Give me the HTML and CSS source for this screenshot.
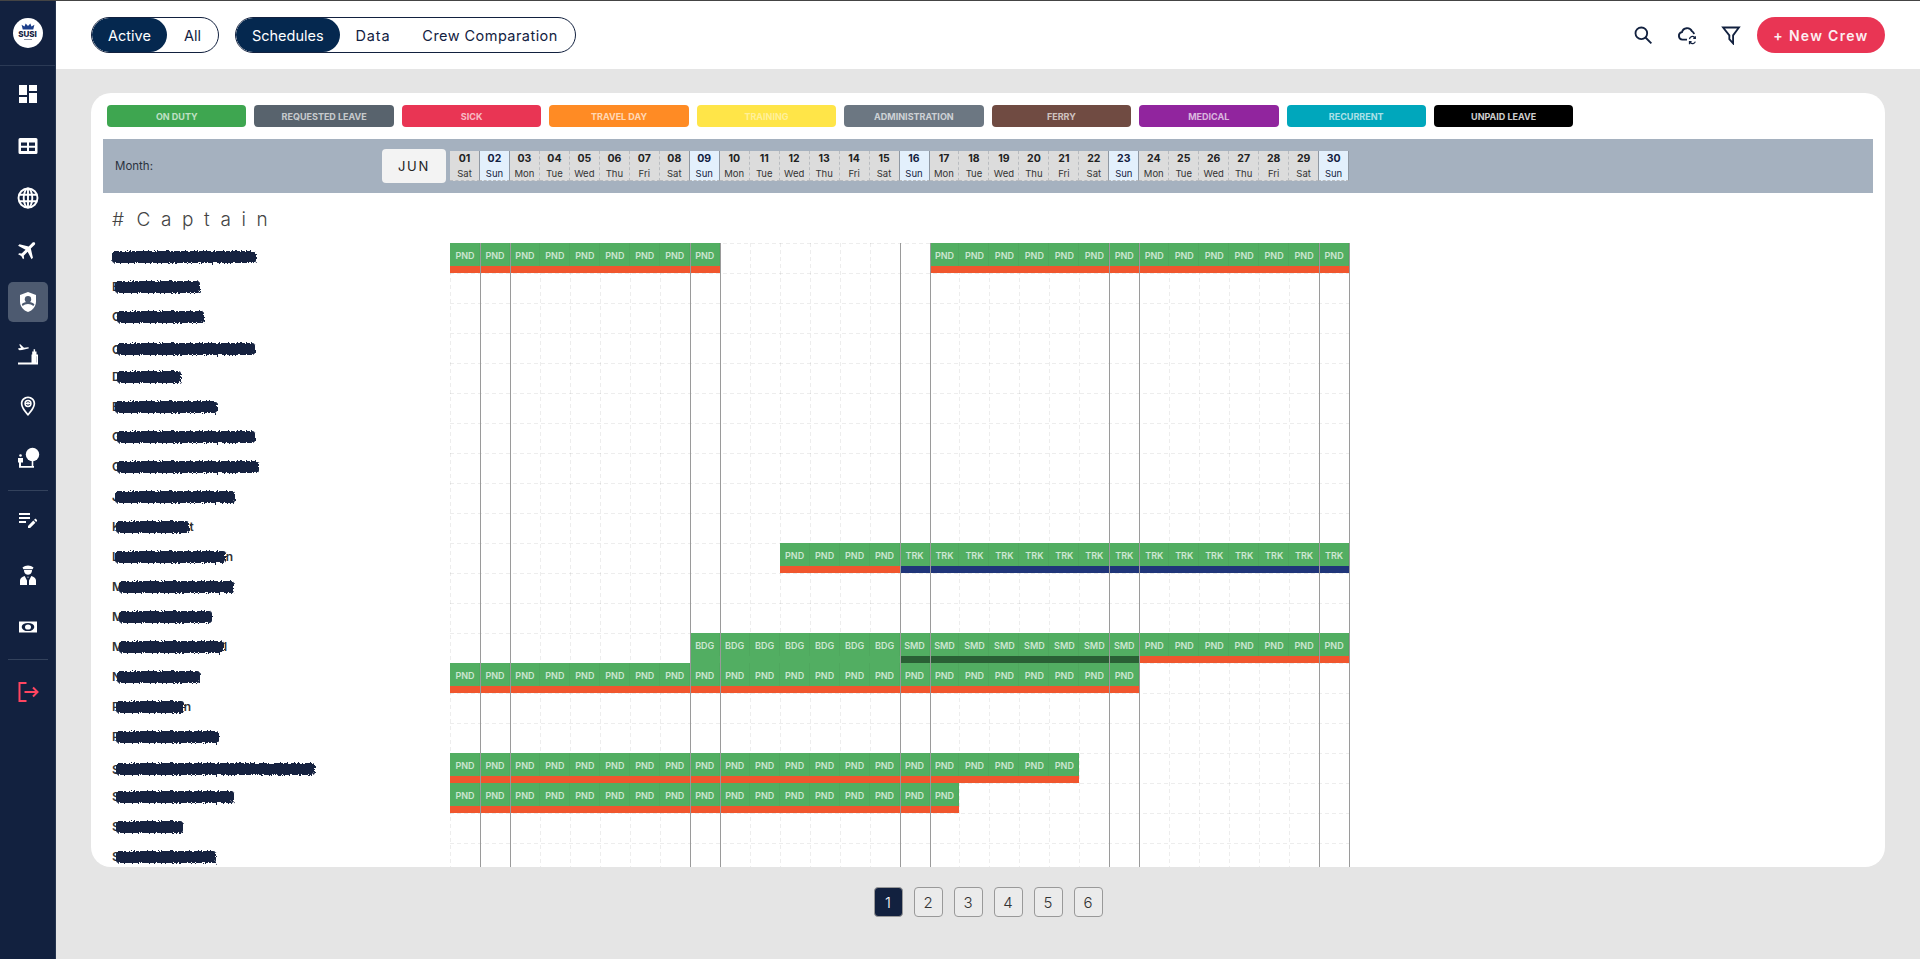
FILE: index.html
```html
<!DOCTYPE html>
<html lang="en">
<head>
<meta charset="utf-8">
<title>Crew Schedules</title>
<link rel="stylesheet" href="styles.css">
</head>
<body>
<svg class="defs" width="0" height="0" aria-hidden="true"><filter id="scribble" x="-5%" y="-60%" width="110%" height="220%"><feTurbulence type="fractalNoise" baseFrequency="0.55" numOctaves="2" seed="4"/><feDisplacementMap in="SourceGraphic" scale="5"/><feGaussianBlur stdDeviation="0.35"/></filter></svg>
<div class="app">
<aside class="sidebar">
  <div class="brand">
    <div class="logo">
      <svg class="crown" viewBox="0 0 24 12"><path d="M3 11 1 3l5 3 2-5 4 4 4-4 2 5 5-3-2 8z"/></svg>
      <span class="logo-text">SUSI</span>
      <span class="logo-line"></span>
    </div>
  </div>
  <nav class="nav">
    <a class="nav-item"><svg viewBox="0 0 24 24"><path d="M3 13h8V3H3v10zm0 8h8v-6H3v6zm10 0h8V11h-8v10zm0-18v6h8V3h-8z"/></svg></a>
    <a class="nav-item"><svg viewBox="0 0 24 24"><path fill-rule="evenodd" d="M4 4h16a1.500 1.500 0 0 1 1.500 1.500v13A1.500 1.500 0 0 1 20 20H4a1.500 1.500 0 0 1-1.500-1.500v-13A1.500 1.500 0 0 1 4 4zm1 4.500v3.200h6V8.500zm8 0v3.200h6V8.500zm-8 5.300v3.200h6v-3.200zm8 0v3.200h6v-3.200z"/></svg></a>
    <a class="nav-item"><svg viewBox="0 0 24 24" class="line"><circle cx="12" cy="12" r="9.500"/><ellipse cx="12" cy="12" rx="4.300" ry="9.500"/><path d="M3 8.700h18M3 15.300h18M12 2.500v19"/></svg></a>
    <a class="nav-item"><svg viewBox="0 0 24 24"><path transform="rotate(45 12 12)" d="M21 16v-2l-8-5V3.500c0-.83-.67-1.500-1.500-1.500S10 2.670 10 3.500V9l-8 5v2l8-2.500V19l-2 1.500V22l3.500-1 3.500 1v-1.500L13 19v-5.500l8 2.500z"/></svg></a>
    <a class="nav-item active"><svg viewBox="0 0 24 24"><path d="M12 2 4 5v6.500c0 4.900 3.400 9.100 8 10.500 4.600-1.400 8-5.600 8-10.500V5z"/><circle class="cut" cx="12" cy="9.300" r="3.200"/><path class="cut" d="M5.600 14.200c1.400-1.500 3.900-2.400 6.400-2.400s5 .9 6.400 2.400c-.3.700-.7 1.300-1.100 1.900-1.200-1.200-3.200-2-5.300-2s-4.100.8-5.300 2c-.4-.6-.7-1.200-.7-1.900z"/></svg></a>
    <a class="nav-item"><svg viewBox="0 0 24 24"><path d="M2.500 6.200 5 6l-1.800-3.400 1.100-.3L8 5.700l4-.4c1 0 1.300 1.100.3 1.300L6 8 3.500 8.300 2 7zM2 20.500h20v2H2zM15.500 12.500h6.500v8h-1.500v-6.300h-3.500v6.300h-1.500zM17.600 7.300h1.500v2.200h1.400v3h-4.300v-3h1.400z"/><path d="M17 14h3.500v7H17z"/></svg></a>
    <a class="nav-item"><svg viewBox="0 0 24 24"><path fill-rule="evenodd" d="M12 2.500c4 0 7.200 3 7.200 6.900 0 4.200-4.300 9.300-7.200 12.600-2.900-3.300-7.200-8.400-7.200-12.600 0-3.900 3.200-6.900 7.200-6.900zm0 1.700c-3 0-5.500 2.300-5.500 5.200 0 3 2.900 6.900 5.500 10 2.600-3.100 5.500-7 5.500-10 0-2.900-2.500-5.200-5.500-5.200z"/><path fill-rule="evenodd" d="M12 5.800a3.700 3.700 0 1 1 0 7.400 3.700 3.700 0 0 1 0-7.400zm0 1.500a2.200 2.200 0 0 0-2.100 1.500h1a1.200 1.200 0 0 1 2.200 0h1A2.200 2.200 0 0 0 12 7.300zm-1.100 2.800h-1a2.200 2.200 0 0 0 4.200 0h-1a1.200 1.200 0 0 1-2.200 0z"/></svg></a>
    <a class="nav-item"><svg viewBox="0 0 24 24"><circle cx="16.500" cy="8.500" r="6.700"/><path d="M15.700 14h1.600v6h-1.600z"/><circle cx="4.500" cy="9.500" r="1.300"/><path d="M2 12h5v4.500H5V20h13v1.800H3V16.500H2z"/></svg></a>
    <hr class="nav-rule">
    <a class="nav-item"><svg viewBox="0 0 24 24" class="up"><path d="M3 10h11v2H3v-2zm0-2h11V6H3v2zm0 8h7v-2H3v2zm15.010-3.130.71-.71c.39-.39 1.020-.39 1.410 0l.71.71c.39.39.39 1.020 0 1.410l-.71.71-2.120-2.120zm-.71.71-5.300 5.300V21h2.120l5.300-5.300-2.120-2.120z"/></svg></a>
    <a class="nav-item"><svg viewBox="0 0 24 24"><path d="M6.500 4.500C8 3.300 10 2.500 12 2.500s4 .8 5.500 2l-.9 1.800H7.400z"/><path d="M8 7h8c0 .6 0 1.100-.2 1.700-.5 1.700-2 3-3.800 3s-3.300-1.300-3.800-3C8 8.100 8 7.600 8 7z"/><path d="M4 22v-4.500c0-2.100 2-3.800 4.700-4.500l2.300 4.500V22zm9 0v-4.500l2.300-4.500c2.700.7 4.700 2.400 4.700 4.500V22zM11.300 13.800h1.400l-.7 1.400z"/></svg></a>
    <a class="nav-item"><svg viewBox="0 0 24 24"><path d="M3 6.500h18v11H3z"/><ellipse class="cut" cx="12" cy="12" rx="6.300" ry="4.100"/><ellipse cx="12" cy="12" rx="3" ry="2.600"/></svg></a>
    <hr class="nav-rule">
    <a class="nav-item logout"><svg viewBox="0 0 24 24"><path d="M10.500 3H3.500v18h7M8.500 12H21.500M17 7.500l4.500 4.500-4.500 4.500"/></svg></a>
  </nav>
</aside>
<div class="main">
  <header class="topbar">
    <div class="pill"><span class="pill-item on">Active</span><span class="pill-item all">All</span></div>
    <div class="pill"><span class="pill-item on">Schedules</span><span class="pill-item data">Data</span><span class="pill-item crew">Crew Comparation</span></div>
    <div class="tools">
      <svg class="tool" viewBox="0 0 24 24"><circle cx="10" cy="10" r="7"/><path d="m15 15 7 7"/></svg>
      <svg class="tool" viewBox="0 0 24 24"><path d="M12 17.500H6.500a4.500 4.500 0 0 1-.6-8.900A6.500 6.500 0 0 1 18 7.500a5 5 0 0 1 2.500 3.500"/><path class="thin" d="M15 17a3.500 3.500 0 0 1 6-2.200l1 1M22 20a3.500 3.500 0 0 1-6 1.200l-1-1M22 13.500v2.500h-2.500M15 23v-3h2.500"/></svg>
      <svg class="tool" viewBox="0 0 24 24"><path d="M2.500 3h19l-7 9.500V22l-4.500-5v-4.500z"/></svg>
      <button class="new-crew">+ New Crew</button>
    </div>
  </header>
  <section class="content">
    <div class="card">
      <div class="legend">
        <span class="tag on-duty">ON DUTY</span>
        <span class="tag requested">REQUESTED LEAVE</span>
        <span class="tag sick">SICK</span>
        <span class="tag travel">TRAVEL DAY</span>
        <span class="tag training">TRAINING</span>
        <span class="tag admin">ADMINISTRATION</span>
        <span class="tag ferry">FERRY</span>
        <span class="tag medical">MEDICAL</span>
        <span class="tag recurrent">RECURRENT</span>
        <span class="tag unpaid">UNPAID LEAVE</span>
      </div>
      <div class="month-bar">
        <span class="month-label">Month:</span>
        <button class="month-btn">JUN</button>
        <div class="days">
          <div class="day"><b>01</b><span>Sat</span></div><div class="day sun"><b>02</b><span>Sun</span></div><div class="day"><b>03</b><span>Mon</span></div><div class="day"><b>04</b><span>Tue</span></div><div class="day"><b>05</b><span>Wed</span></div><div class="day"><b>06</b><span>Thu</span></div><div class="day"><b>07</b><span>Fri</span></div><div class="day"><b>08</b><span>Sat</span></div><div class="day sun"><b>09</b><span>Sun</span></div><div class="day"><b>10</b><span>Mon</span></div><div class="day"><b>11</b><span>Tue</span></div><div class="day"><b>12</b><span>Wed</span></div><div class="day"><b>13</b><span>Thu</span></div><div class="day"><b>14</b><span>Fri</span></div><div class="day"><b>15</b><span>Sat</span></div><div class="day sun"><b>16</b><span>Sun</span></div><div class="day"><b>17</b><span>Mon</span></div><div class="day"><b>18</b><span>Tue</span></div><div class="day"><b>19</b><span>Wed</span></div><div class="day"><b>20</b><span>Thu</span></div><div class="day"><b>21</b><span>Fri</span></div><div class="day"><b>22</b><span>Sat</span></div><div class="day sun"><b>23</b><span>Sun</span></div><div class="day"><b>24</b><span>Mon</span></div><div class="day"><b>25</b><span>Tue</span></div><div class="day"><b>26</b><span>Wed</span></div><div class="day"><b>27</b><span>Thu</span></div><div class="day"><b>28</b><span>Fri</span></div><div class="day"><b>29</b><span>Sat</span></div><div class="day sun"><b>30</b><span>Sun</span></div>
        </div>
      </div>
      <h2 class="rank"># Captain</h2>
      <div class="chart">
        <div class="grid-v"></div><div class="grid-h"></div>
        <div class="row"><div class="name"><i class="redact solo" style="width:144px"></i></div><div class="track">
          <span class="d p">PND</span><span class="d p">PND</span><span class="d p">PND</span><span class="d p">PND</span><span class="d p">PND</span><span class="d p">PND</span><span class="d p">PND</span><span class="d p">PND</span><span class="d p">PND</span>
          <span class="d p from-17">PND</span><span class="d p">PND</span><span class="d p">PND</span><span class="d p">PND</span><span class="d p">PND</span><span class="d p">PND</span><span class="d p">PND</span><span class="d p">PND</span><span class="d p">PND</span><span class="d p">PND</span><span class="d p">PND</span><span class="d p">PND</span><span class="d p">PND</span><span class="d p">PND</span>
        </div></div>
        <div class="row"><div class="name">E<i class="redact" style="width:85px"></i></div><div class="track"></div></div>
        <div class="row"><div class="name">G<i class="redact" style="width:87px"></i></div><div class="track"></div></div>
        <div class="row name-low"><div class="name">G<i class="redact" style="width:138px"></i></div><div class="track"></div></div>
        <div class="row"><div class="name">D<i class="redact" style="width:64px"></i></div><div class="track"></div></div>
        <div class="row"><div class="name">E<i class="redact" style="width:102px"></i></div><div class="track"></div></div>
        <div class="row"><div class="name">G<i class="redact" style="width:138px"></i></div><div class="track"></div></div>
        <div class="row"><div class="name">G<i class="redact" style="width:142px"></i></div><div class="track"></div></div>
        <div class="row"><div class="name">J<i class="redact" style="width:120px"></i></div><div class="track"></div></div>
        <div class="row"><div class="name">K<i class="redact" style="width:73px"></i>t</div><div class="track"></div></div>
        <div class="row"><div class="name">L<i class="redact" style="width:111px"></i>n</div><div class="track">
          <span class="d p from-12">PND</span><span class="d p">PND</span><span class="d p">PND</span><span class="d p">PND</span><span class="d t">TRK</span><span class="d t">TRK</span><span class="d t">TRK</span><span class="d t">TRK</span><span class="d t">TRK</span><span class="d t">TRK</span><span class="d t">TRK</span><span class="d t">TRK</span><span class="d t">TRK</span><span class="d t">TRK</span><span class="d t">TRK</span><span class="d t">TRK</span><span class="d t">TRK</span><span class="d t">TRK</span><span class="d t">TRK</span>
        </div></div>
        <div class="row"><div class="name">M<i class="redact" style="width:115px"></i></div><div class="track"></div></div>
        <div class="row"><div class="name">M<i class="redact" style="width:93px"></i></div><div class="track"></div></div>
        <div class="row"><div class="name">M<i class="redact" style="width:105px"></i>l</div><div class="track">
          <span class="d s from-9 bdg">BDG</span><span class="d s bdg">BDG</span><span class="d s bdg">BDG</span><span class="d s bdg">BDG</span><span class="d s bdg">BDG</span><span class="d s bdg">BDG</span><span class="d s bdg">BDG</span><span class="d s">SMD</span><span class="d s">SMD</span><span class="d s">SMD</span><span class="d s">SMD</span><span class="d s">SMD</span><span class="d s">SMD</span><span class="d s">SMD</span><span class="d s">SMD</span><span class="d p">PND</span><span class="d p">PND</span><span class="d p">PND</span><span class="d p">PND</span><span class="d p">PND</span><span class="d p">PND</span><span class="d p">PND</span>
        </div></div>
        <div class="row"><div class="name">N<i class="redact" style="width:83px"></i></div><div class="track">
          <span class="d p">PND</span><span class="d p">PND</span><span class="d p">PND</span><span class="d p">PND</span><span class="d p">PND</span><span class="d p">PND</span><span class="d p">PND</span><span class="d p">PND</span><span class="d p">PND</span><span class="d p">PND</span><span class="d p">PND</span><span class="d p">PND</span><span class="d p">PND</span><span class="d p">PND</span><span class="d p">PND</span><span class="d p">PND</span><span class="d p">PND</span><span class="d p">PND</span><span class="d p">PND</span><span class="d p">PND</span><span class="d p">PND</span><span class="d p">PND</span><span class="d p">PND</span>
        </div></div>
        <div class="row"><div class="name">P<i class="redact" style="width:68px"></i>n</div><div class="track"></div></div>
        <div class="row"><div class="name">R<i class="redact" style="width:103px"></i></div><div class="track"></div></div>
        <div class="row name-low"><div class="name">S<i class="redact" style="width:199px"></i></div><div class="track">
          <span class="d p">PND</span><span class="d p">PND</span><span class="d p">PND</span><span class="d p">PND</span><span class="d p">PND</span><span class="d p">PND</span><span class="d p">PND</span><span class="d p">PND</span><span class="d p">PND</span><span class="d p">PND</span><span class="d p">PND</span><span class="d p">PND</span><span class="d p">PND</span><span class="d p">PND</span><span class="d p">PND</span><span class="d p">PND</span><span class="d p">PND</span><span class="d p">PND</span><span class="d p">PND</span><span class="d p">PND</span><span class="d p">PND</span>
        </div></div>
        <div class="row"><div class="name">S<i class="redact" style="width:118px"></i></div><div class="track">
          <span class="d p">PND</span><span class="d p">PND</span><span class="d p">PND</span><span class="d p">PND</span><span class="d p">PND</span><span class="d p">PND</span><span class="d p">PND</span><span class="d p">PND</span><span class="d p">PND</span><span class="d p">PND</span><span class="d p">PND</span><span class="d p">PND</span><span class="d p">PND</span><span class="d p">PND</span><span class="d p">PND</span><span class="d p">PND</span><span class="d p">PND</span>
        </div></div>
        <div class="row"><div class="name">S<i class="redact" style="width:67px"></i></div><div class="track"></div></div>
        <div class="row"><div class="name">S<i class="redact" style="width:100px"></i></div><div class="track"></div></div>
        <div class="sundays"></div>
      </div>
    </div>
    <div class="pager">
      <button class="page on">1</button><button class="page">2</button><button class="page">3</button><button class="page">4</button><button class="page">5</button><button class="page">6</button>
    </div>
  </section>
</div>
</div>
</body>
</html>
```
FILE: styles.css
```css
* { box-sizing: border-box; }
html, body { margin: 0; height: 100%; }
body {
  font-family: "Inter", "Liberation Sans", sans-serif;
  background: #e5e5e5;
  border-top: 1px solid #444;
  overflow: hidden;
  color: #222;
}
.defs { position: absolute; }
.app { display: flex; height: 958px; }

/* Sidebar */
.sidebar { width: 56px; flex: none; background: #12213f; border-right: 1px solid #24344f; }
.brand {
  height: 65px;
  display: flex;
  align-items: center;
  justify-content: center;
  border-bottom: 1px solid #2b3a55;
}
.logo {
  width: 30px;
  height: 30px;
  border-radius: 50%;
  background: #fff;
  display: flex;
  flex-direction: column;
  align-items: center;
  padding-top: 5px;
}
.crown { width: 14px; height: 7px; fill: #1d3f8a; }
.logo-text { font: 800 8px/8px "Inter", sans-serif; color: #12213f; }
.logo-line { width: 8px; height: 1px; margin-top: 1px; background: #8b94a6; }
.nav { display: flex; flex-direction: column; align-items: center; gap: 12px; padding-top: 8px; }
.nav-item {
  width: 40px;
  height: 40px;
  display: flex;
  align-items: center;
  justify-content: center;
  border-radius: 5px;
}
.nav-item svg { width: 24px; height: 24px; fill: #fff; }
.nav-item svg.up { position: relative; top: -4px; }
.nav-item .cut { fill: #12213f; }
.nav-item.active { background: #4d5a70; }
.nav-item.active .cut { fill: #4d5a70; }
.nav-item svg.line { fill: none; stroke: #fff; stroke-width: 1.9; }
.logout svg { fill: none; stroke: #ff4560; stroke-width: 2; }
.nav-rule { width: 40px; height: 1px; margin: 0; border: 0; background: #33425c; }

/* Top bar */
.main { flex: 1; min-width: 0; display: flex; flex-direction: column; }
.topbar {
  height: 68px;
  flex: none;
  display: flex;
  align-items: center;
  gap: 16px;
  padding: 0 35px;
  background: #fff;
}
.pill {
  display: flex;
  height: 36px;
  border: 1px solid #12213f;
  border-radius: 18px;
  overflow: hidden;
}
.pill-item {
  display: flex;
  align-items: center;
  padding: 0 16px;
  font-size: 14.500px;
  color: #12213f;
}
.pill-item.on { background: #05284f; color: #fff; border-radius: 18px; padding: 0 16px; }
.pill-item.all { padding: 0 17px; }
.pill-item.data { letter-spacing: .8px; }
.pill-item.crew { padding: 0 17px 0 16px; letter-spacing: .45px; }
.tools { margin-left: auto; display: flex; align-items: center; }
.tool {
  width: 20px;
  height: 20px;
  margin-right: 24px;
  fill: none;
  stroke: #12213f;
  stroke-width: 2.200;
}
.tool .thin { stroke-width: 1.500; }
.tool:nth-child(3) { margin-right: 16px; }
.new-crew {
  width: 128px;
  height: 36px;
  border: 0;
  border-radius: 18px;
  background: #e93554;
  color: #fdeef1;
  font: 600 14px "Inter", sans-serif;
  letter-spacing: 1.300px;
}

/* Content */
.content { flex: 1; min-height: 0; padding: 24px 35px 0; display: flex; flex-direction: column; }
.card {
  height: 774px;
  flex: none;
  background: #fff;
  border-radius: 20px;
  padding: 12px 12px 0;
  display: flex;
  flex-direction: column;
  overflow: hidden;
}
.legend { display: flex; gap: 8px; padding-left: 4px; }
.tag {
  width: 139.450px;
  height: 22px;
  flex: none;
  display: flex;
  align-items: center;
  justify-content: center;
  border-radius: 4px;
  font-size: 9px;
  font-weight: 700;
  color: rgba(255, 255, 255, .68);
}
.on-duty { background: #3ea650; }
.requested { background: #58636d; }
.sick { background: #e93554; }
.travel { background: #ff8b24; }
.training { background: #ffe548; color: rgba(255, 255, 255, .45); }
.admin { background: #6c7782; }
.ferry { background: #704b42; }
.medical { background: #91259e; }
.recurrent { background: #00a7bc; }
.unpaid { background: #000; color: rgba(255, 255, 255, .82); }

.month-bar {
  height: 54px;
  flex: none;
  margin-top: 12px;
  background: #a5b1bf;
  display: flex;
  align-items: center;
}
.month-label { width: 279px; padding-left: 12px; font-size: 11.500px; color: #2b3340; }
.month-btn {
  width: 64px;
  height: 34px;
  border: 0;
  border-radius: 4px;
  background: #f3f3f3;
  font: 400 13px "Inter", sans-serif;
  letter-spacing: 1.700px;
  color: #222;
}
.days { display: flex; margin-left: 4px; }
.day {
  width: 29.970px;
  height: 30px;
  display: flex;
  flex-direction: column;
  align-items: center;
  background: #dcdcdc;
  border-right: 1px dashed #b9bcc0;
  border-bottom: 1px dashed #b9bcc0;
  font-size: 9.500px;
  color: #333;
}
.day b { font-size: 10.500px; font-weight: 700; line-height: 15px; color: #222; }
.day span { line-height: 15px; }
.day.sun { background: #e3f0fc; color: #12213f; border-right: 1px solid #8f98a3; border-left: 1px solid #8f98a3; margin-left: -1px; width: 30.970px; }
.day.sun b { color: #12213f; }

.rank {
  margin: 15px 0 0 9px;
  height: 35px;
  flex: none;
  font-size: 19px;
  font-weight: 300;
  line-height: 24px;
  letter-spacing: 10.600px;
  word-spacing: -14px;
  color: #444;
}
.chart { position: relative; flex: 1; min-height: 0; }
.row { display: flex; height: 30px; position: relative; }
.name {
  width: 347px;
  flex: none;
  padding: 0 0 3px 9px;
  display: flex;
  align-items: center;
  font-size: 12px;
  font-weight: 600;
  color: #333;
}
.name-low .name { padding: 2px 0 0 9px; }
.redact {
  display: block;
  height: 12px;
  margin-left: -4px;
  background: #12213f;
  border-radius: 3px;
  filter: url(#scribble);
}
.redact.solo { margin-left: 0; }
.track { display: grid; grid-template-columns: repeat(30, 29.970px); grid-template-rows: 30px; width: 899px; }
.d {
  display: block;
  height: 30px;
  padding-top: 7px;
  background-clip: padding-box;
  background-color: #52ae62;
  border-bottom: 7px solid;
  box-shadow: inset -1px 0 0 rgba(0, 0, 0, .03);
  text-align: center;
  font-size: 9px;
  line-height: 11px;
  font-weight: 600;
  color: rgba(255, 255, 255, .72);
}
.p { border-bottom-color: #f0562d; }
.t { border-bottom-color: #1f3579; }
.s { border-bottom-color: #2a6035; }
.bdg { border-bottom-color: #52ae62; }
.from-9 { grid-column-start: 9; }
.from-12 { grid-column-start: 12; }
.from-17 { grid-column-start: 17; }

.grid-v, .grid-h, .sundays { position: absolute; top: 0; bottom: 0; left: 347px; width: 900px; pointer-events: none; }
.grid-v {
  background: repeating-linear-gradient(90deg, rgba(0, 0, 0, .07) 0 1px, transparent 1px 29.970px);
  -webkit-mask-image: repeating-linear-gradient(180deg, #000 0 4px, transparent 4px 7px);
  mask-image: repeating-linear-gradient(180deg, #000 0 4px, transparent 4px 7px);
}
.grid-h {
  background: repeating-linear-gradient(180deg, rgba(0, 0, 0, .07) 0 1px, transparent 1px 30px);
  -webkit-mask-image: repeating-linear-gradient(90deg, #000 0 4px, transparent 4px 7px);
  mask-image: repeating-linear-gradient(90deg, #000 0 4px, transparent 4px 7px);
}
.sundays {
  left: 377px;
  width: 870px;
  background: repeating-linear-gradient(90deg, #9a9a9a 0 1px, transparent 1px 29.970px, #9a9a9a 29.970px 30.970px, transparent 30.970px 209.800px);
}

/* Pager */
.pager { display: flex; justify-content: center; gap: 11px; margin-top: 20px; }
.page {
  width: 29px;
  height: 30px;
  padding: 0;
  border: 1px solid #999;
  border-radius: 4px;
  background: #ebebeb;
  font: 300 15px "Inter", sans-serif;
  color: #333;
}
.page.on { background: #12213f; color: #fff; }
```
